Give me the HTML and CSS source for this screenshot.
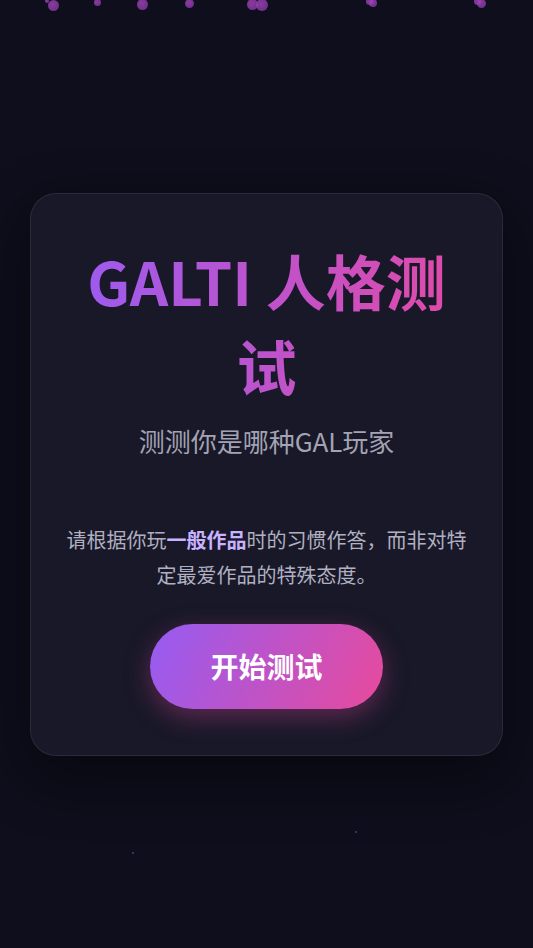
FILE: index.html
```html
<!DOCTYPE html>
<html lang="zh-CN">
<head>
    <meta charset="UTF-8">
    <meta name="viewport" content="width=device-width, initial-scale=1.0">
    <title>GALTI 人格测试</title>
    <link rel="stylesheet" href="styles.css">
</head>
<body>
    <div class="particles">
        <span class="dot" style="left: 45px; top: -1px; width: 4px; height: 4px;"></span>
        <span class="dot" style="left: 48px; top: 0px; width: 11px; height: 11px;"></span>
        <span class="dot" style="left: 94px; top: -1px; width: 7px; height: 7px;"></span>
        <span class="dot" style="left: 137px; top: -1px; width: 11px; height: 11px;"></span>
        <span class="dot" style="left: 185px; top: -1px; width: 9px; height: 9px;"></span>
        <span class="dot" style="left: 247px; top: -1px; width: 11px; height: 11px;"></span>
        <span class="dot" style="left: 256px; top: -1px; width: 12px; height: 12px;"></span>
        <span class="dot" style="left: 366px; top: -2px; width: 7px; height: 7px;"></span>
        <span class="dot" style="left: 369px; top: -1px; width: 8px; height: 8px;"></span>
        <span class="dot" style="left: 474px; top: -2px; width: 7px; height: 7px;"></span>
        <span class="dot" style="left: 477px; top: -1px; width: 9px; height: 9px;"></span>
        <span class="dot tiny" style="left: 132px; top: 852px; width: 2px; height: 2px;"></span>
        <span class="dot tiny" style="left: 355px; top: 831px; width: 2px; height: 2px;"></span>
    </div>

    <main class="page">
        <section class="card">
            <h1 class="title">GALTI 人格测试</h1>
            <p class="subtitle">测测你是哪种GAL玩家</p>
            <p class="desc">请根据你玩<strong>一般作品</strong>时的习惯作答，而非对特定最爱作品的特殊态度。</p>
            <button class="start">开始测试</button>
        </section>
    </main>
</body>
</html>
```

FILE: styles.css
```css
* {
    box-sizing: border-box;
}

body {
    margin: 0;
    background-color: #0e0e1c;
    font-family: "Noto Sans CJK SC", "Noto Sans", sans-serif;
    color: #fff;
    overflow: hidden;
}

.particles {
    position: absolute;
    inset: 0;
    pointer-events: none;
}

.dot {
    position: absolute;
    border-radius: 50%;
    background: radial-gradient(circle at 40% 40%, rgba(170, 70, 190, 0.8), rgba(130, 55, 165, 0.75));
}

.dot.tiny {
    background: rgba(150, 70, 200, 0.6);
}

.page {
    min-height: 100vh;
    padding: 0 30px;
    display: flex;
    align-items: center;
    justify-content: center;
}

.card {
    width: 100%;
    background-color: #181828;
    border: 1px solid rgba(255, 255, 255, 0.08);
    border-radius: 26px;
    padding: 43px 32px 46px;
    text-align: center;
    box-shadow: 0 20px 60px rgba(0, 0, 0, 0.45);
}

.title {
    margin: 0;
    font-size: 60px;
    font-weight: 700;
    line-height: 85px;
    background: linear-gradient(90deg, #9a5cf2, #e24aa6);
    -webkit-background-clip: text;
    background-clip: text;
    color: transparent;
}

.subtitle {
    margin: 15px 0 0;
    font-size: 26px;
    line-height: 38px;
    color: #a3a3b4;
}

.desc {
    margin: 62px 0 0;
    font-size: 20px;
    line-height: 35px;
    color: #b0b0c0;
}

.desc strong {
    color: #c9b2ff;
    font-weight: 700;
}

.start {
    margin-top: 32px;
    width: 233px;
    height: 85px;
    border: none;
    border-radius: 43px;
    background: linear-gradient(115deg, #955cf3, #e84a9b);
    color: #fff;
    font-family: inherit;
    font-size: 28px;
    font-weight: 700;
    box-shadow: 0 8px 26px rgba(228, 72, 160, 0.35);
}
```
